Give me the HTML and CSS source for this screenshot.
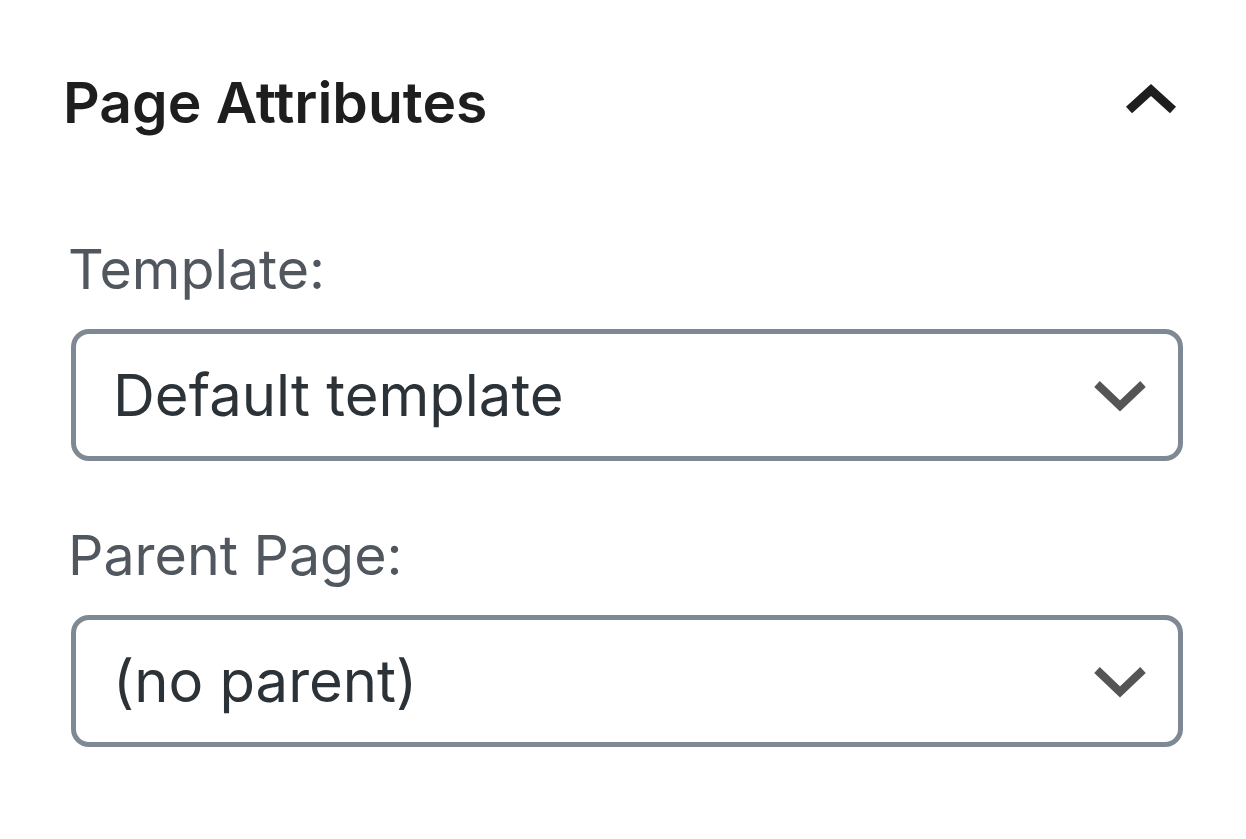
FILE: index.html
```html
<!DOCTYPE html>
<html>
<head>
<meta charset="utf-8">
<link rel="stylesheet" href="styles.css">
</head>
<body>
<div class="panel">
  <div class="panel-head">
    <h2 class="panel-title">Page Attributes</h2>
    <svg class="head-chevron" width="60" height="40" viewBox="0 0 60 40"><polyline points="4,28 26,8 48,28" fill="none" stroke="#1e1e1e" stroke-width="9"/></svg>
  </div>
  <div class="field field-first">
    <div class="label">Template:</div>
    <div class="select"><span class="select-text">Default template</span>
      <svg class="sel-chevron" width="52" height="36" viewBox="0 0 52 36"><polyline points="3,7 26,29 49,7" fill="none" stroke="#555555" stroke-width="8"/></svg>
    </div>
  </div>
  <div class="field">
    <div class="label">Parent Page:</div>
    <div class="select"><span class="select-text">(no parent)</span>
      <svg class="sel-chevron" width="52" height="36" viewBox="0 0 52 36"><polyline points="3,7 26,29 49,7" fill="none" stroke="#555555" stroke-width="8"/></svg>
    </div>
  </div>
</div>
</body>
</html>
```
FILE: styles.css
```css
html, body { margin: 0; padding: 0; background: #fff; }
body { font-family: Inter, "Noto Sans", sans-serif; width: 1246px; height: 839px; overflow: hidden; }
.panel { padding: 0 63px 0 63px; }
.panel-head { display: flex; align-items: center; justify-content: space-between; height: 100px; margin-top: 52px; }
.panel-title { margin: 0; font-size: 57px; font-weight: 600; color: #1e1e1e; letter-spacing: 0; }
.head-chevron { margin-right: -2px; }
.field { padding-left: 8px; margin-top: 59px; }
.field-first { margin-top: 82px; }
.label { font-size: 55.5px; color: #50575e; margin-left: -3px; line-height: 70px; margin-bottom: 25px; }
.select { box-sizing: border-box; height: 132px; border: 5px solid #7e8993; border-radius: 18px; display: flex; align-items: center; justify-content: space-between; padding: 0 32px 0 37px; }
.select-text { font-size: 58px; color: #2c3338; }
```
